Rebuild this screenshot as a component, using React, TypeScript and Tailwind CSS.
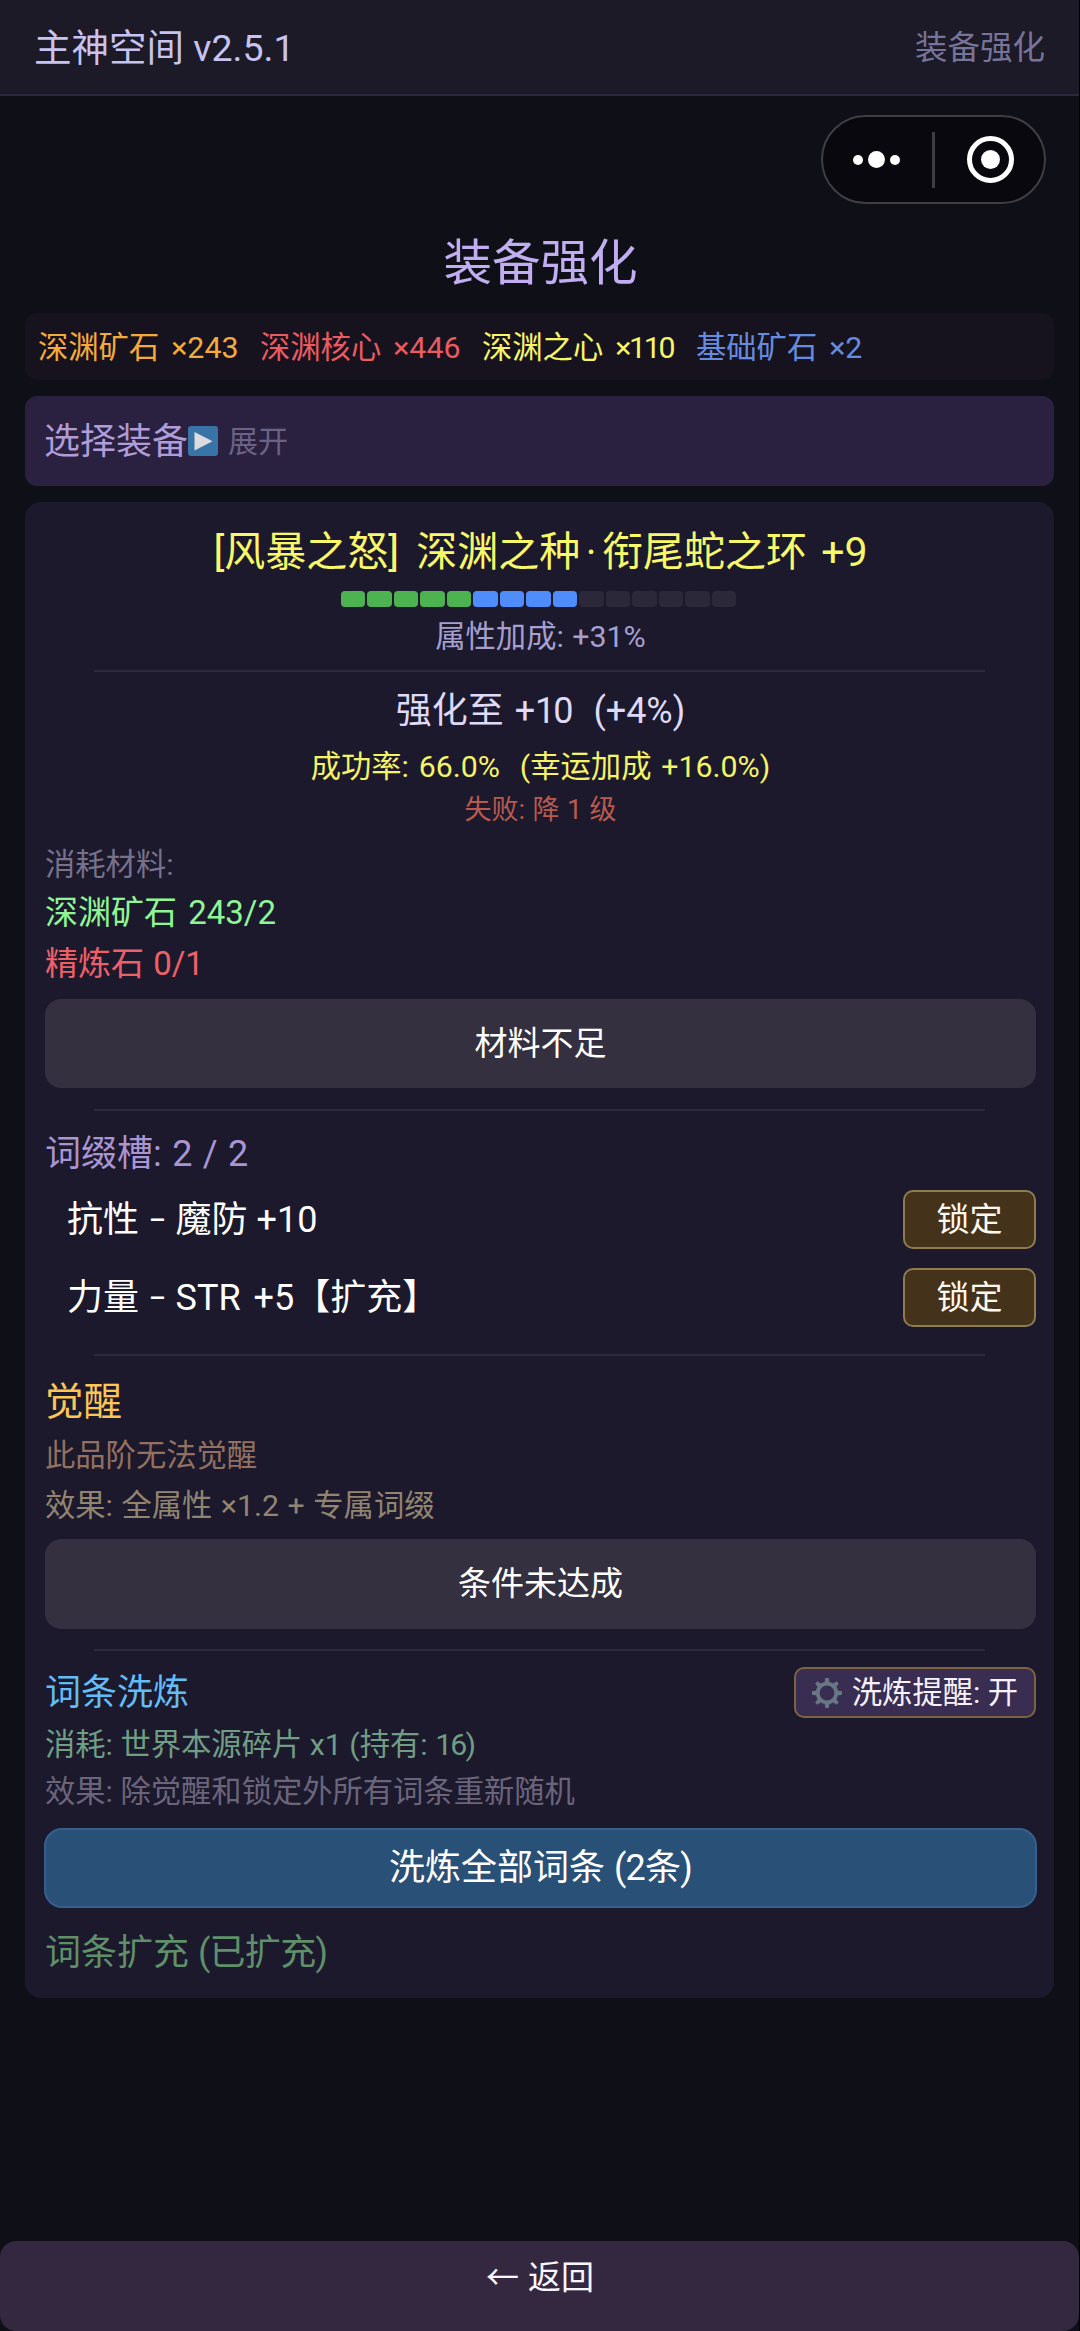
import React from "react";

const materials = [
  { name: "深渊矿石", count: "×243", cls: "w-[222px] text-[#f5ab3a]", countCls: "" },
  { name: "深渊核心", count: "×446", cls: "w-[222px] text-[#ea5b62]", countCls: "" },
  { name: "深渊之心", count: "×110", cls: "w-[214px] text-[#f6f667]", countCls: "tracking-[-2.3px]" },
  { name: "基础矿石", count: "×2", cls: "text-[#668ce0]", countCls: "" },
];

const affixes = [
  { kind: "抗性", value: "魔防 +10", valueCls: "[word-spacing:0px]" },
  { kind: "力量", value: "STR +5【扩充】", valueCls: "[word-spacing:4px]" },
];

function Divider({ className }: { className: string }) {
  return <div className={`ml-[49px] mr-[51px] h-[2px] shrink-0 bg-[#2d2a3f] ${className}`} />;
}

function Gear() {
  return (
    <svg width="30" height="30" viewBox="-15 -15 30 30" className="shrink-0 text-[#687784]">
      <circle r="9.3" fill="none" stroke="currentColor" strokeWidth="3.8" />
      {[0, 45, 90, 135, 180, 225, 270, 315].map((a) => (
        <path key={a} d="M-2.4 -10.5 L-1.7 -15 H1.7 L2.4 -10.5Z" fill="currentColor" transform={`rotate(${a})`} />
      ))}
    </svg>
  );
}

function Capsule() {
  return (
    <div className="flex h-[89px] w-[225px] items-center rounded-full border-[2.5px] border-[#3f3e45] bg-[#08080e]">
      <div className="flex flex-1 items-center justify-center gap-[5px] pr-[2px]">
        <span className="size-[10px] rounded-full bg-white" />
        <span className="size-[17px] rounded-full bg-white" />
        <span className="size-[10px] rounded-full bg-white" />
      </div>
      <div className="h-14 w-[2.5px] bg-[#3f3e45]" />
      <div className="flex flex-1 items-center justify-center pl-[2px]">
        <span className="flex size-[47px] items-center justify-center rounded-full border-[5px] border-white">
          <span className="size-[19px] rounded-full bg-white" />
        </span>
      </div>
    </div>
  );
}

export default function App() {
  return (
    <div className="flex h-[2331px] w-[1080px] flex-col overflow-hidden whitespace-pre border-r border-black bg-[#0f0f17] font-[Roboto,'Noto_Sans_CJK_SC',sans-serif] text-white">
      <header className="flex h-[96px] shrink-0 items-center justify-between border-b-2 border-[#2b2940] bg-[#1b1a26] px-[34px] pt-[2px]">
        <span className="text-[37.5px] text-[#c7c3f0]">主神空间 v2.5.1</span>
        <span className="pt-px text-[32.5px] text-[#77739a]">装备强化</span>
      </header>

      <div className="mt-[19px] flex shrink-0 justify-end pr-[33px]">
        <Capsule />
      </div>

      <h1 className="mt-[29px] flex h-[60px] shrink-0 items-center justify-center pl-[2px] pt-[2px] text-[48.5px] text-[#c0aef0]">装备强化</h1>

      <main className="flex flex-col px-[25px]">
        <section className="mt-[20px] flex h-[67px] items-center rounded-xl bg-[#16131f] px-[13px] pt-[2px] text-[30.3px] [word-spacing:4.5px]">
          {materials.map((m) => (
            <span key={m.name} className={m.cls}>
              {m.name} <span className={m.countCls}>{m.count}</span>
            </span>
          ))}
        </section>

        <section className="mt-[16px] flex h-[90px] items-center rounded-xl bg-[#29213f] pl-[19px]">
          <span className="pt-px text-[36px] text-[#b09cd6]">选择装备</span>
          <svg width="30" height="30" viewBox="0 0 30 30">
            <rect width="30" height="30" rx="3" fill="#3874a6" />
            <path d="M6.5 6 V24.5 L24.5 15.2Z" fill="#dcdbe0" />
          </svg>
          <span className="ml-[10px] text-[30px] text-[#6b6385]">展开</span>
        </section>

        <section className="mt-[16px] flex h-[1496px] flex-col rounded-2xl bg-[#1c192c] pl-[20px] pr-[18px] pt-[26px]">
          <div className="flex h-[50px] items-center justify-center text-[41px] text-[#f8f868]">
            [风暴之怒]<span className="ml-[7px]"> 深渊之种</span>
            <span className="mx-[5.5px]">·</span>衔尾蛇之环<span className="ml-[4px]"> +9</span>
          </div>
          <div className="mr-[4px] mt-[13px] flex h-4 justify-center gap-[2px]">
            {Array.from({ length: 15 }, (_, i) => (
              <span
                key={i}
                className={`h-4 w-[24.5px] rounded-[4px] ${i < 5 ? "bg-[#4db350]" : i < 9 ? "bg-[#4f8cfc]" : "bg-[#2b283a]"}`}
              />
            ))}
          </div>
          <div className="mt-[10px] flex h-10 items-center justify-center text-[30.3px] text-[#a5a0cf] [word-spacing:1px]">属性加成: +31%</div>
          <Divider className="mt-[13px]" />
          <div className="mt-[17px] flex h-11 items-center justify-center text-[36px] text-[#dedaf8] [word-spacing:2px]">
            强化至 +<span className="tracking-[-2px]">10</span>{"  (+4%)"}
          </div>
          <div className="mt-[14px] flex h-10 items-center justify-center text-[30.3px] text-[#f4f466] [word-spacing:2.4px]">{"成功率: 66.0%  (幸运加成 +16.0%)"}</div>
          <div className="mt-[3px] flex h-10 items-center justify-center text-[27px] text-[#ba5a4e] [word-spacing:0.7px]">失败: 降 1 级</div>

          <div className="mt-[15px] flex h-10 items-center text-[30.3px] text-[#77718c]">消耗材料:</div>
          <div className="mt-[6px] flex h-11 items-center text-[33px] text-[#90f595] [word-spacing:3px]">深渊矿石 243/2</div>
          <div className="mt-[7px] flex h-11 items-center text-[33px] text-[#ee6068] [word-spacing:1px]">精炼石 0/1</div>
          <button className="mt-[13px] flex h-[89px] items-center justify-center rounded-2xl bg-[#353040] text-[33px]">材料不足</button>

          <Divider className="mt-[21px]" />
          <div className="mt-[21px] flex h-11 items-center text-[36px] text-[#a895d2] [word-spacing:1.5px]">词缀槽: 2 / 2</div>
          <div className="mt-[14px] flex flex-col gap-[19px]">
            {affixes.map((a) => (
              <div key={a.kind} className="flex h-[59px] items-center justify-between pl-[22px] text-[36px]">
                <span className="pt-px [word-spacing:1px]">
                  {a.kind} <span className="relative -top-[3px] text-[26px] font-medium">–</span> <span className={a.valueCls}>{a.value}</span>
                </span>
                <button className="flex h-[59px] w-[133px] items-center justify-center rounded-[10px] border-2 border-[#8f7c4c] bg-[#44321b] pt-px text-[33px] text-[#fff8ec]">锁定</button>
              </div>
            ))}
          </div>

          <Divider className="mt-[27px]" />
          <div className="mt-[22px] flex h-12 items-center text-[38.5px] text-[#fbc558]">觉醒</div>
          <div className="mt-[10px] flex h-10 items-center text-[30.3px] text-[#93705f]">此品阶无法觉醒</div>
          <div className="mt-[10px] flex h-10 items-center text-[30.3px] text-[#918471] [word-spacing:1px]">效果: 全属性 ×1.2 + 专属词缀</div>
          <button className="mt-[13px] flex h-[90px] items-center justify-center rounded-2xl bg-[#353040] text-[33px]">条件未达成</button>

          <Divider className="mt-[20px]" />
          <div className="mt-[16px] flex h-[51px] items-center justify-between">
            <span className="text-[36px] text-[#62bdf6]">词条洗炼</span>
            <button className="flex h-[51px] w-[242px] items-center justify-center gap-[10px] rounded-[10px] border-2 border-[#7d643e] bg-[#392d52] text-[30.3px] text-[#f7f2ff]">
              <Gear />
              <span>洗炼提醒: 开</span>
            </button>
          </div>
          <div className="mt-[7px] flex h-10 items-center text-[30.3px] text-[#709e84]">
            消耗: 世界本源碎片 x1 (持有: <span className="tracking-[-1.8px]">16)</span>
          </div>
          <div className="mt-[7px] flex h-10 items-center text-[30.3px] text-[#6b657c]">效果: 除觉醒和锁定外所有词条重新随机</div>
          <button className="-mx-px mt-[16px] flex h-20 items-center justify-center rounded-[18px] border-2 border-[#365f8b] bg-[#295077] text-[36px]">
            洗炼全部词条 <span className="tracking-[-0.8px]">(2条)</span>
          </button>
          <div className="mt-[23px] flex h-11 items-center text-[36px] text-[#5f9069]">
            词条扩充 <span className="tracking-[-0.7px]">(已扩充)</span>
          </div>
        </section>
      </main>

      <button className="mt-auto flex h-[90px] shrink-0 items-center justify-center rounded-2xl bg-[#33283f] pb-[16px] pl-px text-[33px] text-[#faf6ff] [word-spacing:1px]">← 返回</button>
    </div>
  );
}
